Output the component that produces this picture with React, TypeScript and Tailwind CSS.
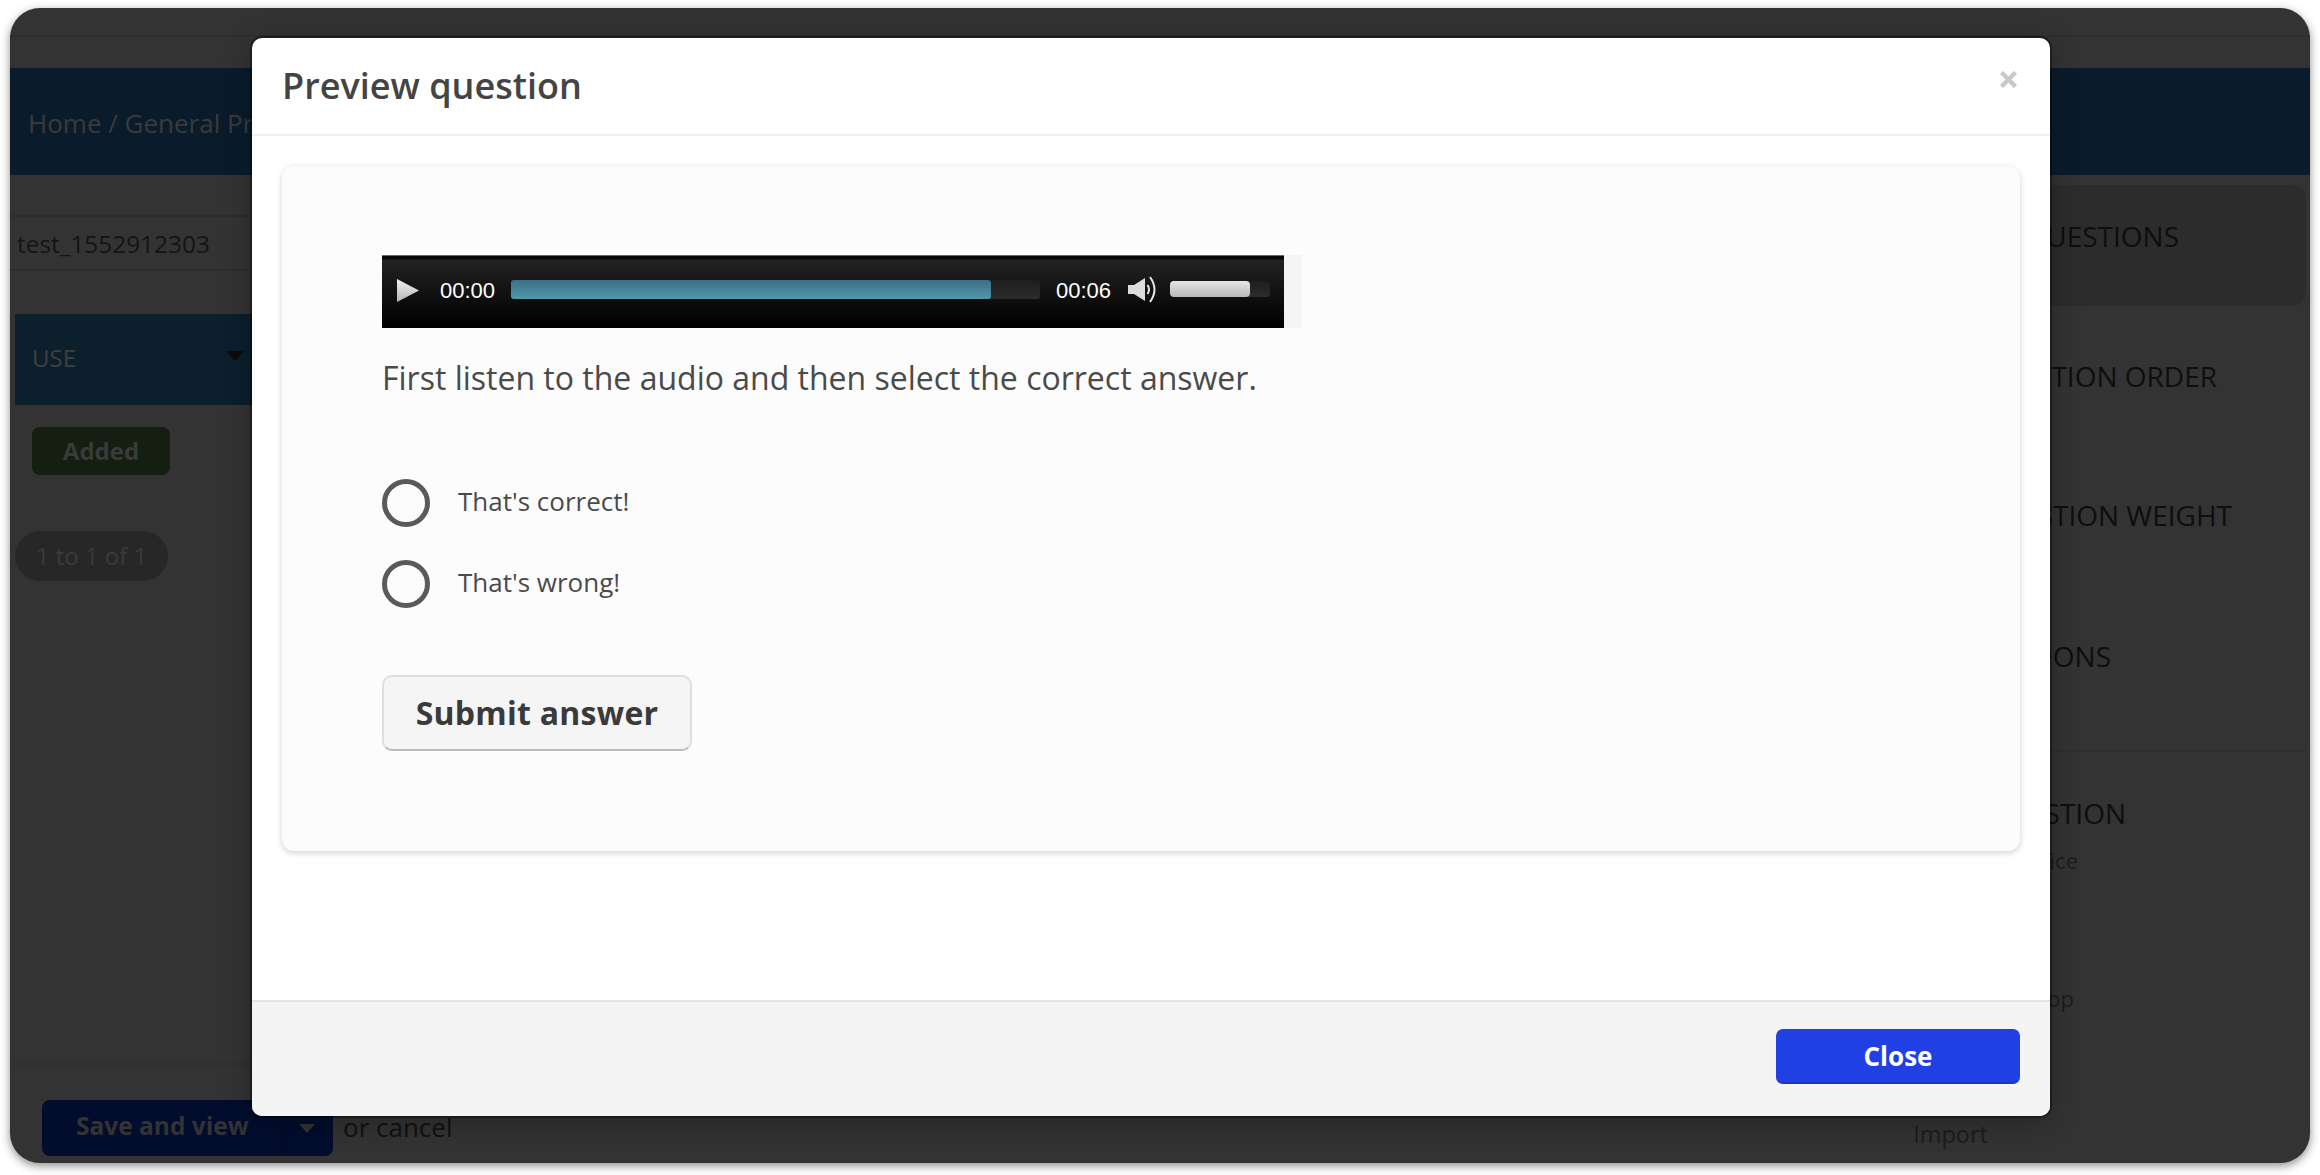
const openSans = "font-['Open_Sans',sans-serif]"

function PlayIcon() {
  return (
    <svg width="22" height="23" viewBox="0 0 22 23" className="shrink-0 mb-[2px]">
      <defs>
        <linearGradient id="playFill" x1="0" y1="0" x2="0" y2="1">
          <stop offset="0" stopColor="#f2f2f2" />
          <stop offset="1" stopColor="#b4b4b4" />
        </linearGradient>
      </defs>
      <path d="M0 0 L22 11.5 L0 23 Z" fill="url(#playFill)" />
    </svg>
  )
}

function SpeakerIcon() {
  return (
    <svg width="28" height="27" viewBox="0 0 28 27" className="shrink-0 mb-[4px]" fill="none">
      <path d="M0 9 H6 L17 2 V25 L6 18 H0 Z" fill="#dcdcdc" />
      <path d="M19.5 9 Q22.5 13.5 19.5 18" stroke="#e4e4e4" strokeWidth="2" />
      <path d="M22 1 Q31 13.5 22 26" stroke="#e4e4e4" strokeWidth="2" />
    </svg>
  )
}

function AudioPlayer() {
  return (
    <div className="w-[920px] h-[73px] bg-[#f5f5f5]">
      <div className="flex items-center w-[902px] h-full pl-[15px] bg-[linear-gradient(to_bottom,#666_0,#666_1px,#080808_1px,#080808_4px,#222_5px,#000_100%)] font-['Liberation_Sans',sans-serif] text-[22px] text-white">
        <PlayIcon />
        <span className="ml-[21px] mb-[3px] w-[55px]">00:00</span>
        <div className="ml-[16px] mb-[5px] w-[529px] h-[19px] rounded-[3px] bg-[linear-gradient(to_bottom,#1e1e1e,#2c2c2c)]">
          <div className="w-[480px] h-full rounded-[3px] bg-[linear-gradient(to_bottom,#3d6e84,#5199ad)]" />
        </div>
        <span className="ml-[16px] mb-[3px] w-[55px]">00:06</span>
        <div className="ml-[17px]">
          <SpeakerIcon />
        </div>
        <div className="ml-[14px] mb-[6px] w-[100px] h-[16px] rounded-[4px] bg-[linear-gradient(to_bottom,#1e1e1e,#2c2c2c)]">
          <div className="w-[80px] h-full rounded-[4px] bg-[linear-gradient(to_bottom,#e6e6e6,#b8b8b8)]" />
        </div>
      </div>
    </div>
  )
}

function AnswerOption({ label }: { label: string }) {
  return (
    <label className="flex items-center h-[48px]">
      <span className="block w-[48px] h-[48px] rounded-full border-[5px] border-[#5a5a56]" />
      <span className="ml-[28px] mb-[4px] text-[26px] text-[#4a4a4a]">{label}</span>
    </label>
  )
}

function PreviewModal() {
  return (
    <div className="absolute left-[242px] top-[30px] flex flex-col w-[1798px] h-[1078px] overflow-hidden rounded-[10px] bg-white shadow-[0_0_0_2px_rgba(0,0,0,0.35),0_6px_30px_rgba(0,0,0,0.3)]">
      <div className="relative flex items-center h-[98px] pl-[30px] border-b-2 border-[#efefef]">
        <h3 className="text-[36px] font-semibold text-[#444444]">Preview question</h3>
        <span className="absolute right-[33px] top-[33px] h-[17px] w-[17px] text-[#c8c8c8]">
          <svg viewBox="0 0 17 17" className="w-full h-full" fill="none" stroke="currentColor" strokeWidth="4.4">
            <path d="M1.5 1.5 L15.5 15.5 M15.5 1.5 L1.5 15.5" />
          </svg>
        </span>
      </div>
      <div className="flex-1 px-[30px] pt-[30px]">
        <div className="h-[685px] rounded-[12px] bg-[#fcfcfc] pl-[100px] pt-[89px] shadow-[0_2px_6px_rgba(0,0,0,0.18)]">
          <AudioPlayer />
          <p className="mt-[29px] text-[32px] leading-[42px] text-[#4a4a4a]">First listen to the audio and then select the correct answer.</p>
          <div className="mt-[80px] flex flex-col gap-[33px]">
            <AnswerOption label="That's correct!" />
            <AnswerOption label="That's wrong!" />
          </div>
          <button
            type="button"
            className="mt-[67px] w-[310px] h-[76px] rounded-[10px] border-2 border-[#dedede] border-b-[#bbbbbb] bg-[#f5f5f5] text-[32px] font-bold tracking-[0.25px] text-[#3a3a3a]"
          >
            Submit answer
          </button>
        </div>
      </div>
      <div className="flex items-start justify-end h-[116px] pt-[27px] pr-[30px] border-t-2 border-[#e4e4e4] bg-[#f4f4f4]">
        <button
          type="button"
          className="w-[244px] h-[55px] pt-[2px] rounded-[7px] border-b-2 border-[#1c37bb] bg-[#2040e4] text-[26px] font-bold text-white"
        >
          Close
        </button>
      </div>
    </div>
  )
}

function BackLeft() {
  return (
    <div className="flex-1 flex flex-col min-w-0">
      <div className="mt-[40px] h-[56px] pl-[7px] pt-[2px] flex items-center border-y-2 border-[#2e2e2e] text-[24.4px] text-[#141414]">test_1552912303</div>
      <div className="mt-[43px] ml-[5px] h-[91px] flex items-center justify-between pl-[17px] pb-[4px] pr-[1537px] bg-[#0c1f2c] text-[24px] font-medium text-[#3f3f3f]">
        <span>USE</span>
        <span className="block w-0 h-0 mb-[4px] border-x-[9px] border-x-transparent border-t-[10px] border-t-[#0c0c0c]" />
      </div>
      <div className="mt-[22px] ml-[22px] w-[138px] h-[48px] flex items-center justify-center rounded-[8px] bg-[#141f11] text-[24px] font-bold text-[#3a3a3a]">Added</div>
      <div className="mt-[56px] ml-[5px] w-[153px] h-[50px] flex items-center justify-center rounded-full bg-[#272727] text-[24px] text-[#3a3a3a]">1 to 1 of 1</div>
      <div className="mt-auto h-[100px] border-t-2 border-[#2f2f2f] pt-[35px] pl-[32px] flex items-start">
        <div className="flex w-[291px] h-[56px] rounded-[8px] bg-[#020d2e] text-[24.5px] font-bold text-[#333]">
          <span className="w-[240px] pl-[34px] leading-[52px]">Save and view</span>
          <span className="flex-1 flex items-center justify-center pr-[2px] border-l border-[#030a22]">
            <span className="block w-0 h-0 border-x-[8px] border-x-transparent border-t-[9px] border-t-[#333]" />
          </span>
        </div>
        <span className="ml-[10px] text-[26px] leading-[54px] text-[#111]">or cancel</span>
      </div>
    </div>
  )
}

function BackRight() {
  return (
    <div className="w-[529px] shrink-0 flex flex-col items-end text-right text-[#0e0e0e]">
      <div className="mt-[10px] mr-[4px] w-[480px] h-[121px] rounded-[14px] bg-[#2c2c2c] pt-[32px] pr-[127px] text-[28px] font-medium leading-[38px]">QUESTIONS</div>
      <div className="mt-[51px] pr-[93px] text-[28px] font-medium leading-[38px]">QUESTION ORDER</div>
      <div className="mt-[101px] pr-[78px] text-[28px] font-medium leading-[38px]">QUESTION WEIGHT</div>
      <div className="mt-[103px] pr-[199px] text-[28px] font-medium leading-[38px]">OPTIONS</div>
      <div className="mt-[75px] mr-[4px] w-[480px] border-t-2 border-[#2f2f2f]" />
      <div className="mt-[42px] pr-[184px] text-[28px] font-medium leading-[38px]">ADD QUESTION</div>
      <div className="mt-[13px] pr-[232px] text-[22px] leading-[30px] text-[#1c1c1c]">Multiple choice</div>
      <div className="mt-[108px] pr-[236px] text-[22px] leading-[30px] text-[#1c1c1c]">Drag and drop</div>
      <div className="mt-auto mb-[14px] pr-[322px] text-[23.5px] leading-[30px] text-[#1c1c1c]">Import</div>
    </div>
  )
}

export default function App() {
  return (
    <div className={`h-[1175px] bg-white pt-[8px] px-[10px] ${openSans}`}>
      <div className="relative flex flex-col h-[1155px] overflow-hidden rounded-[30px] bg-[#333333] shadow-[0_3px_10px_rgba(0,0,0,0.45)]">
        <div className="h-[29px] shrink-0 border-b-2 border-[#2e2e2e]" />
        <div className="mt-[31px] h-[107px] shrink-0 flex items-center pl-[18px] pt-[4px] bg-[#0a1c2b] text-[26px] text-[#3a3a3a]">Home / General Practice</div>
        <div className="flex flex-1 min-h-0">
          <BackLeft />
          <BackRight />
        </div>
        <PreviewModal />
      </div>
    </div>
  )
}
